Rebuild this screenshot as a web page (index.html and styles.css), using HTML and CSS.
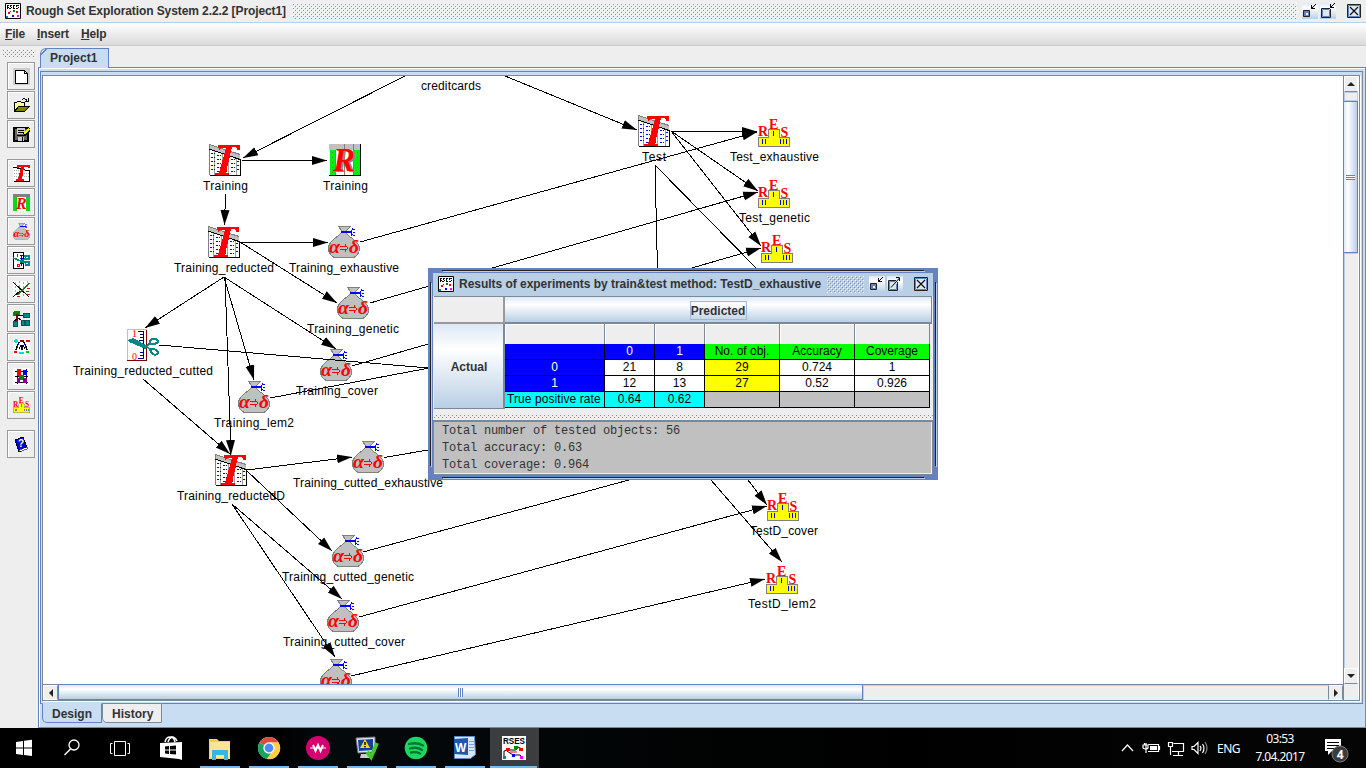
FILE: index.html
```html
<!DOCTYPE html>
<html lang="en">
<head>
<meta charset="utf-8">
<title>Rough Set Exploration System</title>
<link rel="stylesheet" href="styles.css">
</head>
<body>
<svg class="defs" width="0" height="0">
  <defs>
    <marker id="arrow" markerUnits="userSpaceOnUse" markerWidth="17" markerHeight="12" refX="15" refY="6" orient="auto"><path d="M0 1.500L15 6L0 10.500Z" fill="#000"/></marker>
    <symbol id="rses" viewBox="0 0 16 16">
      <path fill="#fff" stroke="#000" d="M.5.5h15v15H.5z"/>
      <path d="M2 2h1v4H2zM3 2h1v1H3zM3 4h1v1H3zM4 5h1v1H4zM5 2h2v1H5zM5 3h1v1H5zM6 4h1v1H6zM5 5h1v1H5zM8 2h1v4H8zM9 2h1v1H9zM9 5h1v1H9zM11 2h3v1h-3zM11 3h1v1h-1zM13 4h1v1h-1zM11 5h2v1h-2z"/>
      <path fill="red" d="M3 9h2v2H3zM11 8h2v2h-2z"/><path fill="#007a20" d="M8 7h2v2H8z"/><path fill="#088" d="M1 13h2v2H1z"/><path fill="blue" d="M7 12h2v2H7z"/><path fill="#f0f" d="M12 12h2v2h-2z"/><path fill="red" d="M5 8h1v1H5z"/>
    </symbol>
    <symbol id="rses-big" viewBox="0 0 24 24">
      <path fill="#fff" d="M0 0h24v24H0z"/>
      <path fill="none" stroke="#000" d="M2 21V15l4-1h8l2-3 4 2M5 15l6 4h7l2 2"/>
      <path fill="red" d="M4 12h4v3H4zM17 12h4v3h-4z"/><path fill="#080" d="M12 10h4v3h-4z"/><path fill="#088" d="M1 20h3v3H1z"/><path fill="blue" d="M10 18h3v3h-3z"/><path fill="#f0f" d="M18 20h3v3h-3z"/><path fill="none" stroke="red" d="M8 16h7"/>
    </symbol>
    <symbol id="table" viewBox="0 0 32 32">
      <path fill="#fff" d="M1 4l30 10v17H1z"/>
      <path stroke="#a0a0a0" d="M5.500 6v25M13.500 8v23M19.500 10v21M27.500 12v19"/>
      <path fill="none" stroke="#00f" stroke-dasharray="2 1" d="M2 9.500h4M2 13.500h4M2 17.500h4M2 21.500h4M2 25.500h4M8 11.500h4M8 15.500h4M8 19.500h4M8 23.500h4M8 27.500h4M16 15.500h3M16 19.500h3M16 23.500h3M16 27.500h3M22 15.500h4M22 19.500h4M22 23.500h4M22 27.500h4M28 17.500h3M28 21.500h3M28 25.500h3"/>
      <path fill="#c0c0c0" d="M0 0l31 10v6L0 5z"/><path fill="none" stroke="#808080" d="M.5 31V.5L31 10.500"/>
      <path fill="none" stroke="#000" d="M0 5l31 10.500V31.500H1"/>
      <path fill="#fff" d="M21 3h8v6l-8-2z"/>
      <path fill="red" d="M9 1h22v5h-3q0-3-3-3h-2l-6 26h3v2H6v-2h4L17 4h-3q-3 0-4 2z"/>
    </symbol>
    <symbol id="reduct" viewBox="0 0 32 32">
      <path fill="#fff" d="M0 0h32v32H0z"/><path fill="#0e1" d="M1 6h5v25H1zM25 6h6v25h-6z"/><path fill="#c0c0c0" d="M0 0h32v6H0z"/>
      <path stroke="#808080" d="M15.500 0v32M24.500 0v32M6.500 6v25"/><path fill="none" stroke="#393" stroke-dasharray="1 4" d="M3.500 8v22M28.500 8v22"/>
      <path fill="none" stroke="#000" d="M31.500 0v31.500H0"/>
      <text class="glyph-r gray" x="6" y="28">R</text><text class="glyph-r" x="4" y="27">R</text>
    </symbol>
    <symbol id="bag" viewBox="0 0 32 32">
      <path fill="#c0c0c0" stroke="#808080" d="M10.500.5h12l-4 4v3q2 3 6 5 7 5 7 11 0 4-5 7.500H5.500Q.5 28 .5 22.500q0-5 5-9 5-4 7.500-6.500V4z"/>
      <path fill="none" stroke="#00f" stroke-width="2" d="M13 6h11"/><path fill="none" stroke="#00f" d="M22 6l3-3h2M22 6l3 3h2M24 3v-1M23 8v2M25 6h2"/>
      <text class="glyph" x="1" y="26.500" textLength="11" lengthAdjust="spacingAndGlyphs">α</text><path fill="none" stroke="red" d="M12 20.500h7M12 23.500h7M17 18.500l3 3.500-3 3.500"/><text class="glyph" x="21" y="26.500" textLength="10" lengthAdjust="spacingAndGlyphs">δ</text>
    </symbol>
    <symbol id="res" viewBox="0 0 32 28" overflow="visible">
      <path fill="#ff0" stroke="#808080" d="M.5 27.500v-9h10v-8h11v8h10v9z"/><path stroke="#00f" d="M4.500 20v5M7.500 20v5M15.500 12v5M22.500 20v5M25.500 20v5M28.500 20v5"/>
      <text class="letter" x="0" y="17">R</text><text class="letter" x="11" y="9.500">E</text><text class="letter" x="22.500" y="17.500">S</text>
    </symbol>
    <symbol id="cut" viewBox="0 0 32 32">
      <path fill="#fff" stroke="#c0c0c0" d="M.5 31V.5h19v31"/><path fill="none" stroke="#800000" d="M0 31.500h19.500V.5"/>
      <path fill="none" stroke="#000080" d="M11 2.500h5.500V29.500H11M13 5.500h3M13 8.500h3M12 11.500h4M13 23.500h3M13 26.500h3"/>
      <text class="digit" x="5" y="8">1</text><text class="digit" x="5" y="31">0</text>
      <path fill="#088" d="M0 11l6-2 15 8-2 3L2 13z"/><path fill="none" stroke="#088" stroke-width="2" d="M17 19l5-4M19 17l5 4M23 12q1-2 4-2 4 0 4 3-3 3-8 2zM23 20q5-1 8 3 0 2-3 3-3-1-5-5z"/>
    </symbol>
    <symbol id="mini" viewBox="0 0 16 16"><path fill="url(#bt)" d="M0 0h16v16H0z"/><path fill="#6382bf" stroke="#222" stroke-width="1" d="M1.500 7.500h6v6h-6z"/><path fill="#fff" d="M4 10h2v2H4z"/><path fill="none" stroke="#000" d="M14 1L9.500 5.500M9.500 2v3.500H13"/></symbol>
    <symbol id="maxi" viewBox="0 0 16 16"><path fill="url(#bt)" d="M0 0h16v16H0z"/><path fill="#dce8f5" stroke="#222" d="M10 5.500H1.500v9h9V6"/><path fill="none" stroke="#6382bf" d="M9 6.500H2.500v7h7V7"/><path fill="none" stroke="#000" d="M15 0l-4.500 4.500M10.500 1v3.500H14"/></symbol>
    <symbol id="maxi2" viewBox="0 0 16 16"><path fill="url(#bt)" d="M0 0h16v16H0z"/><path fill="#dce8f5" stroke="#222" d="M9 4.500H1.500v10h9V6"/><path fill="none" stroke="#6382bf" d="M8 5.500H2.500v8h7V8"/><path fill="none" stroke="#000" d="M4 11.500L12.500 2M9 1.500h3.500V5"/></symbol>
    <symbol id="close" viewBox="0 0 14 14"><path fill="#dce8f5" stroke="#222" d="M.5.5h13v13H.5z"/><path fill="none" stroke="#6382bf" d="M1.500 1.500h11v11h-11z"/><path fill="none" stroke="#111" stroke-width="1.200" d="M3 3l8 8M11 3l-8 8"/></symbol>
    <linearGradient id="bt" x2="0" y2="1"><stop offset="0" stop-color="#dce8f5"/><stop offset=".3" stop-color="#fff"/><stop offset="1" stop-color="#b8cfe5"/></linearGradient>
  </defs>
</svg>

<div class="app">
  <header class="titlebar">
    <svg class="i16"><use href="#rses"/></svg>
    <span class="title">Rough Set Exploration System 2.2.2 [Project1]</span>
    <span class="bumps"></span>
    <svg class="i16 b1"><use href="#mini"/></svg><svg class="i16 b2"><use href="#maxi"/></svg><svg class="i14"><use href="#close"/></svg>
  </header>
  <nav class="menubar"><span><u>F</u>ile</span><span><u>I</u>nsert</span><span><u>H</u>elp</span></nav>
  <div class="workspace">
    <aside class="tools">
      <div class="grip"></div>
      <button><svg viewBox="0 0 17 17"><path fill="#ccc" d="M0 0h17v17H0z"/><path fill="#fff" stroke="#000" d="M2.500 2.500h9l3 3v10h-12z"/><path fill="none" stroke="#000" d="M11.500 2.500v3h3"/></svg></button>
      <button><svg class="clear" viewBox="0 0 17 17"><path fill="#ff9" stroke="#000" d="M1.500 14.500v-9h2l1-1h3l1 1h3v4h-5z"/><path fill="#808000" stroke="#000" d="M1.500 14.500l4-5h11l-5 5z"/><path fill="none" stroke="#000" d="M9 3q3-3 5 1M15 1v3h-3"/></svg></button>
      <button><svg class="clear" viewBox="0 0 17 17"><path fill="#666" stroke="#000" stroke-width="1.500" d="M1 2h14v13H1z"/><path fill="#ccc" d="M4 2h8v6H4zM5 11h6v4H5z"/><path stroke="#000" d="M5 4.500h6M5 6.500h6M9.500 11v4M4 9.500h9"/><path stroke="#000" stroke-width="3" d="M11 9l6-6"/><path stroke="#ee0" stroke-width="1.500" d="M11 8l5-5"/></svg></button>
      <i class="sep"></i>
      <button><svg viewBox="0 0 17 17"><path fill="none" stroke="#aaa" stroke-dasharray="1 1" d="M1 5.500h15M1 8.500h15M1 11.500h15"/><path fill="none" stroke="#000" d="M0 2l16 4M16.500 5v11.500H1"/><path fill="red" d="M4 0h13v3h-2V2h-4L9 14h2v2H3v-2h2L8 2H6v1H4z"/></svg></button>
      <button><svg viewBox="0 0 17 17"><path fill="#0d1" d="M0 2h4v15H0zM13 2h4v15h-4z"/><path fill="#808080" d="M0 0h17v3H0z"/><text class="mini-r" x="3" y="15">R</text></svg></button>
      <button><svg class="clear"><use href="#bag"/></svg></button>
      <button><svg viewBox="0 0 17 17"><path fill="#fff" stroke="#000" d="M.5.5h10v16H.5z"/><path stroke="#00a" d="M7 3.500h3M7 6.500h3M7 11.500h3M8.500 3v11"/><path stroke="red" d="M4.500 2v3M4 12.500h2v2H4z" fill="none"/><path fill="none" stroke="#088" stroke-width="1.700" d="M0 6l13 5M7 10l6-4M12 4h4v3h-3zM12 10h4v3h-3z"/></svg></button>
      <button><svg viewBox="0 0 17 17"><path fill="#fff" d="M0 0h17v17H0z"/><path stroke="#0ee" stroke-dasharray="2 2" d="M2.500 1v13M6.500 0v14M10.500 1v15M14.500 0v7"/><path stroke="#000" d="M0 1l16 15M0 16l7-6"/><path stroke="#277027" stroke-width="1.500" d="M5 14L16 2"/><path stroke="red" d="M14 7.500h3M13 10.500h3M14 13.500h3M4 15.500h3"/></svg></button>
      <button><svg class="clear" viewBox="0 0 17 17"><path fill="#080" d="M1 1h6v5H0V2z"/><path stroke="#800000" stroke-width="2" d="M4 4v7"/><path stroke="#000" d="M5 5.500h7M5 8l6 4M4 9l-3 2"/><path fill="#088" stroke="#055" d="M10.500 3.500h6v4h-6zM.5 11.500h4v5h-4zM8.500 10.500h3v5h-3zM12.500 10.500h4v5h-4z"/></svg></button>
      <button><svg viewBox="0 0 17 17"><path fill="#fff" d="M0 0h17v17H0z"/><path stroke="#0dd" stroke-width="1.500" d="M1 2h4M3 0v4M6 14h5"/><path stroke="red" stroke-width="2" d="M13 2h4M1 13h3"/><path stroke="#0c0" stroke-width="2" d="M13 13h3"/><path stroke="#800" stroke-width="2" d="M7 2h4"/><path stroke="#00f" fill="none" stroke-width="1.500" d="M5 5L3 11M12 5l2 6"/><path stroke="#000" fill="none" d="M7 3Q3 5 4 11M10 3q4 2 3 8M6 10l2-4 1 5 1-5 2 4"/></svg></button>
      <button><svg viewBox="0 0 17 17"><path fill="#fff" d="M0 0h17v17H0z"/><path stroke="#000" d="M2 8.500h13M2 14.500h13M2 3.500h13M4.500 1v15M13.500 1v15"/><path fill="#e00" d="M4 1h4v7H4z"/><path fill="#00e" d="M10 2h4v5h-4z"/><path fill="#080" d="M6 7h5v5H6z"/><path fill="#808" d="M4 10h3v5H4zM10 10h4v5h-4z"/></svg></button>
      <button><svg class="clear"><use href="#res"/></svg></button>
      <i class="sep"></i>
      <button><svg class="clear" viewBox="0 0 17 17"><path fill="#00d" stroke="#000" d="M2 4l8-3 4 11-8 4z"/><path fill="#fff" stroke="#000" stroke-width=".6" d="M6 14l8-3v2l-8 3z"/><text class="q" x="5" y="11">?</text></svg></button>
    </aside>
    <main class="pane">
      <div class="tabs"><span class="tab">Project1</span></div>
      <div class="outer">
        <div class="inner">
          <div class="view">
            <svg class="canvas" width="1300" height="608" viewBox="43 76 1300 608">
              <g class="icons">
                <use href="#table" x="209" y="144" width="32" height="32"/><use href="#reduct" x="329" y="144" width="32" height="32"/><use href="#table" x="208" y="226" width="32" height="32"/><use href="#table" x="638" y="115" width="32" height="32"/><use href="#table" x="215" y="454" width="32" height="32"/><use href="#cut" x="127" y="329" width="32" height="32"/>
                <use href="#bag" x="328" y="226" width="32" height="32"/><use href="#bag" x="337" y="287" width="32" height="32"/><use href="#bag" x="320" y="349" width="32" height="32"/><use href="#bag" x="238" y="381" width="32" height="32"/><use href="#bag" x="352" y="441" width="32" height="32"/><use href="#bag" x="332" y="535" width="32" height="32"/><use href="#bag" x="327" y="600" width="32" height="32"/><use href="#bag" x="320" y="659" width="32" height="32"/>
                <use href="#res" x="758" y="119" width="32" height="28"/><use href="#res" x="758" y="180" width="32" height="28"/><use href="#res" x="761" y="235" width="32" height="28"/><use href="#res" x="767" y="493" width="32" height="28"/><use href="#res" x="766" y="566" width="32" height="28"/>
              </g>
              <g class="edges">
                <path d="M405 76L243 158"/><path d="M505 76L637 130"/><path d="M242 160.500H327"/><path d="M225.500 194L224.500 225"/><path d="M240 242.500H328"/><path d="M240 242L337 303"/><path d="M224 277L145 328"/><path d="M224 277L254 380"/><path d="M224 277L336 349"/><path d="M225 277L231 455"/><path d="M143 379L230 454"/>
                <path d="M360 242L757 132"/><path d="M370 303L758 192"/><path d="M352 366L761 248"/><path d="M671 131.500H757"/><path d="M671 131L758 191"/><path d="M671 131L761 246"/><path d="M247 470L352 457"/><path d="M247 471L332 551"/><path d="M232 504L342 599"/><path d="M232 504L335 657"/>
                <path d="M359 617L767 506"/><path d="M351 676L765 579"/><path d="M748 480L767 505"/><path d="M711 480L782 562"/>
                <g class="plain"><path d="M159 345L440 369"/><path d="M270 398L440 366"/><path d="M655 165L657.500 270"/><path d="M655 165L758 270"/><path d="M384 457.500L440 448"/><path d="M363 552L640 477"/></g>
              </g>
              <g class="labels">
                <text x="421" y="90" textLength="60">creditcards</text><text x="203" y="190" textLength="45">Training</text><text x="323" y="190" textLength="45">Training</text><text x="174" y="272" textLength="100">Training_reducted</text><text x="289" y="272" textLength="110">Training_exhaustive</text><text x="307" y="333" textLength="92">Training_genetic</text><text x="296" y="395" textLength="82">Training_cover</text><text x="214" y="427" textLength="80">Training_lem2</text><text x="73" y="375" textLength="140">Training_reducted_cutted</text><text x="177" y="500" textLength="108">Training_reductedD</text><text x="293" y="487" textLength="150">Training_cutted_exhaustive</text><text x="282" y="581" textLength="132">Training_cutted_genetic</text><text x="283" y="646" textLength="122">Training_cutted_cover</text>
                <text x="642" y="161" textLength="24">Test</text><text x="730" y="161" textLength="89">Test_exhaustive</text><text x="739" y="222" textLength="71">Test_genetic</text><text x="750" y="535" textLength="68">TestD_cover</text><text x="748" y="608" textLength="68">TestD_lem2</text>
              </g>
            </svg>
            <div class="vscroll"><i class="sb up"></i><i class="vgap"></i><i class="vthumb"><b></b></i><i class="track"></i><i class="sb down"></i></div>
            <div class="hscroll"><i class="sb left"></i><i class="hthumb"><b></b></i><i class="track"></i><i class="sb right"></i></div>
            <div class="corner"></div>
          </div>
        </div>
        <div class="btabs"><span class="on">Design</span><span>History</span></div>
      </div>
    </main>
  </div>
  <footer class="taskbar">
    <div class="task"><svg viewBox="0 0 48 40"><path fill="#fff" d="M16 14l7-1v6.500h-7zM24 12.800l8-1v7.700h-8zM16 20.500h7V27l-7-1zM24 20.500h8V28l-8-1z"/></svg></div>
    <div class="task"><svg viewBox="0 0 48 40"><circle cx="26" cy="17" r="5" fill="none" stroke="#fff" stroke-width="1.300"/><path stroke="#fff" stroke-width="1.400" d="M22.500 21L16.500 27"/></svg></div>
    <div class="task"><svg viewBox="0 0 48 40"><path fill="none" stroke="#fff" d="M18.500 13.500h11v14h-11zM16.500 15.500h-2v10h2M31.500 15.500h2v10h-2"/></svg></div>
    <div class="task store"><svg viewBox="0 0 48 40"><path fill="#fff" d="M14 15l22-1v18l-3-1-19-2z"/><path fill="none" stroke="#fff" stroke-width="1.500" d="M19 14q1-5 5-5 4 0 5 5M22 14q1-4 5-5 3 1 4 4"/><path fill="#000" d="M19 18.500l4-.5v3.500h-4zM24 18l6-.5v4h-6zM19 22.500h4V26l-4-.5zM24 22.500h6v4l-6-.5z"/></svg></div>
    <div class="task run"><svg viewBox="0 0 48 40"><path fill="#f9ce55" d="M13 11h8l2 2h11v18H13z"/><path fill="#ffe498" d="M14 14h20v16H14z"/><path fill="#37b4e8" d="M16 32V22h16v10h-4v-5h-8v5z"/></svg></div>
    <div class="task run"><svg viewBox="0 0 48 40"><circle cx="24" cy="20" r="11" fill="#fff"/><path fill="#dd4b3e" d="M24 20L14.500 14.500A11 11 0 0 1 33.500 14.500H24z"/><path fill="#1aa260" d="M24 20L14.500 14.500A11 11 0 0 0 22 31l5-7z"/><path fill="#ffce44" d="M27 24l-5 7A11 11 0 0 0 33.500 14.500H24z"/><circle cx="24" cy="20" r="5.700" fill="#fff"/><circle cx="24" cy="20" r="4.400" fill="#4c8bf5"/></svg></div>
    <div class="task run"><svg viewBox="0 0 48 40"><circle cx="24" cy="20" r="12" fill="#d4006f"/><path fill="none" stroke="#fff" stroke-width="2" d="M19 17l2.500 6 2.500-6 2.500 6 2.500-6"/><path stroke="#fff" d="M16 20h16"/></svg></div>
    <div class="task run"><svg viewBox="0 0 48 40"><path fill="#dde3e8" stroke="#777" d="M13 10l19-1v15l-17 1z"/><path fill="#123fa5" d="M15 12l15-1v11l-14 1z"/><path fill="#ccc" d="M18 26h9l3 4H17z"/><path fill="#ffd51c" d="M22 11l5 9H17z"/><path stroke="#000" stroke-width="1.500" d="M22 14v3M22 18v1.500"/><path fill="none" stroke="#42c928" stroke-width="4" d="M24 24l4 5 6-14"/></svg></div>
    <div class="task run"><svg viewBox="0 0 48 40"><circle cx="24" cy="20" r="11.300" fill="#1ed760"/><path fill="none" stroke="#073" stroke-width="2.300" stroke-linecap="round" d="M17 16q8-2 14 1.500M18 20.500q7-2 12 1.500M19 24.500q5-1 9 1"/></svg></div>
    <div class="task run"><svg viewBox="0 0 48 40"><path fill="#d7e8fa" stroke="#5c8dc8" d="M13.500 8.500h20l1 18-5 4h-16z"/><path fill="#1e58ad" d="M13 11l14-1v17l-14-1z"/><path stroke="#7ba1d6" d="M28 13.500h5M28 16.500h5M28 19.500h5M28 22.500h5"/><text class="word" x="14" y="24">W</text></svg></div>
    <div class="task run active"><svg viewBox="0 0 48 40"><use href="#rses-big" x="12" y="8" width="24" height="24"/><text class="rtext" x="13" y="16" textLength="22" lengthAdjust="spacingAndGlyphs">RSES</text></svg></div>
    <div class="tray">
      <svg width="90" height="20" viewBox="0 0 90 20"><g fill="none" stroke="#fff" stroke-width="1.200"><path d="M1 13l5.500-6L12 13M27.500 6.500h10v7H27M38.500 8v4M25 5v10M22 7h5v3q-2 2-5 0zM23.500 5v2M52.500 5.500h10v8H51M57.500 14v3M52 17.500h10M47.500 4.500h4v4h-4zM49.500 9v8M71 8.500h2l4-4v11l-4-4h-2zM79 8q2 2 0 5M81.500 6q3 4 0 9"/><path stroke="#888" d="M84 4q4 6 0 12"/></g><path fill="#fff" d="M29 8h7v4h-7z"/></svg>
      <span class="lang">ENG</span>
      <div class="clock"><span>03:53</span><span>7.04.2017</span></div>
      <svg class="note" width="26" height="26" viewBox="0 0 26 26"><path fill="#fff" d="M1 1h16v12H8l-4 4v-4H1z"/><path stroke="#000" d="M3 4.500h12M3 7.500h12M3 10.500h8"/><circle cx="16" cy="16" r="8" fill="#3b3b3b" stroke="#777"/><text x="12.700" y="20.500">4</text></svg>
    </div>
  </footer>
</div>

<section class="dialog">
  <div class="dtitle"><svg class="i16"><use href="#rses"/></svg><span class="title">Results of experiments by train&amp;test method: TestD_exhaustive</span><span class="bumps"></span><svg class="i16 b1"><use href="#mini"/></svg><svg class="i16 b2"><use href="#maxi2"/></svg><svg class="i14"><use href="#close"/></svg></div>
  <div class="grid">
    <div class="blank"></div><div class="pred"><span>Predicted</span></div>
    <div class="actual">Actual</div>
    <table>
      <colgroup><col class="w100"><col class="w50"><col class="w50"><col class="w75"><col class="w75"><col class="w75"></colgroup>
      <tr class="head"><th></th><th></th><th></th><th></th><th></th><th></th></tr>
      <tr><td class="blue"></td><td class="blue">0</td><td class="blue">1</td><td class="green">No. of obj.</td><td class="green">Accuracy</td><td class="green">Coverage</td></tr>
      <tr><td class="blue">0</td><td>21</td><td>8</td><td class="yellow">29</td><td>0.724</td><td>1</td></tr>
      <tr><td class="blue">1</td><td>12</td><td>13</td><td class="yellow">27</td><td>0.52</td><td>0.926</td></tr>
      <tr><td class="cyan rate">True positive rate</td><td class="cyan">0.64</td><td class="cyan">0.62</td><td class="gray"></td><td class="gray"></td><td class="gray"></td></tr>
    </table>
  </div>
  <div class="split"></div>
  <pre class="out">Total number of tested objects: 56
Total accuracy: 0.63
Total coverage: 0.964</pre>
  <i class="ln t"></i><i class="ln b"></i><i class="ln l"></i><i class="ln r"></i>
</section>
</body>
</html>
```
FILE: styles.css
```css
* { box-sizing: border-box; }
body { margin: 0; width: 1366px; height: 768px; overflow: hidden; background: #eee; font: bold 12px "Liberation Sans", Arial, sans-serif; color: #333; position: relative; }
i { font-style: normal; display: block; }
svg { display: block; }
.defs { position: absolute; }
.app { display: flex; flex-direction: column; height: 768px; }
.i16 { width: 16px; height: 16px; flex: none; }
.i14 { width: 14px; height: 14px; flex: none; }
.glyph { font: italic bold 18px "Liberation Serif", serif; fill: red; }
.glyph-r { font: italic bold 33px "Liberation Serif", serif; fill: red; }
.glyph-r.gray { fill: #888; }
.mini-r { font: italic bold 16px "Liberation Serif", serif; fill: red; }
.letter { font: bold 14px "Liberation Serif", serif; fill: #f00; }
.digit { font: 10px "Liberation Serif", serif; fill: #f00; }
.q { font: bold 10px "Liberation Sans", sans-serif; fill: #fff; }
.bumps { background-image: radial-gradient(circle at 1.5px 1.5px, #7d92a8 .6px, transparent .75px), radial-gradient(circle at 3.5px 3.5px, #7d92a8 .6px, transparent .75px), radial-gradient(circle at .5px .5px, #fff .6px, transparent .75px), radial-gradient(circle at 2.5px 2.5px, #fff .6px, transparent .75px); background-size: 4px 4px; }

.titlebar { height: 23px; flex: none; border-bottom: 1px solid #b8cfe5; display: flex; align-items: flex-start; padding: 3px 6px 0 5px; }
.titlebar .title { width: 260px; margin: 1px 6px 0 5px; white-space: nowrap; line-height: 15px; letter-spacing: -.09px; }
.titlebar .bumps { flex: 1; height: 16px; }
.b1 { margin-left: 5px; }
.b2 { margin-left: 2px; }
.titlebar .i14 { margin: 1px -1px 0 11px; }
.menubar { height: 23px; flex: none; border-bottom: 1px solid #ccc; background: linear-gradient(#fff, #dadada); display: flex; gap: 12px; padding: 4px 5px; line-height: 14px; letter-spacing: -.15px; }
.workspace { height: 682px; flex: none; display: flex; }

.tools { width: 38px; padding: 3px 3px 0 2px; display: flex; flex-direction: column; }
.grip { height: 9px; margin-bottom: 4px; background-image: radial-gradient(circle at 1.5px 1.5px, #888 .6px, transparent .75px), radial-gradient(circle at 3.5px 3.5px, #888 .6px, transparent .75px); background-size: 4px 4px; }
.tools button { width: 28px; height: 28px; margin: 0 0 1px 5px; padding: 0 0 0 1px; border: 1px solid #999; background: #eee; flex: none; display: flex; align-items: center; justify-content: center; box-shadow: inset 1px 1px #fff; }
.tools button svg { width: 17px; height: 17px; background: #fff; shape-rendering: crispEdges; }
.tools button svg.clear { background: none; }
.sep { height: 10px; flex: none; }

.pane { flex: 1; display: flex; flex-direction: column; min-width: 0; }
.tabs { height: 21px; padding: 2px 0 0 2px; display: flex; }
.tab { position: relative; z-index: 1; width: 69px; height: 20px; background: linear-gradient(135deg, #eee 3px, #6382bf 3px, #6382bf 4.500px, #c8ddf2 4.500px); border: 1px solid #6382bf; border-bottom: 0; border-top-left-radius: 6px; padding: 2px 0 0 9px; line-height: 14px; }
.outer { height: 661px; background: #c8ddf2; border: 1px solid #6382bf; border-right-color: #7a8a99; border-bottom-color: #7a8a99; box-shadow: inset 1px 1px #fff; padding: 3px 2px 0 1px; }
.inner { height: 633px; border: 1px solid #6382bf; border-right-color: #7a8a99; padding: 3px 2px 2px 1px; }
.view { height: 626px; border: 1px solid #7a8a99; box-shadow: 1px 1px #fff; display: grid; grid-template: 608px 16px / 1300px 15px; overflow: hidden; background: #fff; }
.canvas { background: #fff; }
.edges { fill: none; stroke: #000; stroke-width: 1; shape-rendering: crispEdges; }
.edges > path { marker-end: url(#arrow); }
.icons { shape-rendering: crispEdges; }
.labels { font: 12px "Liberation Sans", Arial, sans-serif; fill: #000; }
.vscroll { display: flex; flex-direction: column; border-left: 1px solid #7a8a99; background: #eee; }
.track { flex: 1; border: 1px solid #b8cfe5; border-right: 0; border-bottom: 0; }
.sb { flex: none; width: 14px; height: 16px; border: 1px solid #fff; border-bottom-color: #7a8a99; background: #eee; display: grid; place-items: center; }
.sb::before { content: ""; border: 4px solid transparent; }
.up::before { border-bottom-color: #222; border-top: 0; }
.down::before { border-top-color: #222; border-bottom: 0; }
.left::before { border-right-color: #222; border-left: 0; }
.right::before { border-left-color: #222; border-right: 0; }
.sb.left, .sb.right { width: 15px; height: 15px; border-right-color: #7a8a99; border-bottom-color: #fff; }
.sb.right { border-left-color: #7a8a99; }
.vgap { height: 9px; border: 1px solid #b8cfe5; }
.vthumb { height: 152px; margin-left: -1px; border: 1px solid #6382bf; background: linear-gradient(90deg, #dce8f5, #fff 30%, #b8cfe5); display: grid; place-items: center; }
.vthumb b { width: 9px; height: 5px; background: repeating-linear-gradient(#6382bf 0 1px, #fff 1px 2px); }
.hscroll { display: flex; border-top: 1px solid #7a8a99; background: #eee; }
.hthumb { width: 805px; margin-top: -1px; height: 16px; border: 1px solid #6382bf; background: linear-gradient(#dce8f5, #fff 30%, #b8cfe5); display: grid; place-items: center; }
.hthumb b { width: 5px; height: 9px; background: repeating-linear-gradient(90deg, #6382bf 0 1px, #fff 1px 2px); }
.corner { background: #eee; border: 1px solid #7a8a99; border-width: 0 0 0 1px; }
.btabs { display: flex; padding-left: 2px; margin-top: -1px; line-height: 14px; }
.btabs span { width: 60px; height: 20px; padding: 3px 0 0 9px; background: #eee; border: 1px solid #7a8a99; border-bottom-left-radius: 5px; }
.btabs .on { background: #c8ddf2; border-color: #6382bf; border-top-color: #c8ddf2; }

.taskbar { height: 40px; background: linear-gradient(90deg, #000 0 280px, #04090c 320px, #020505 600px, #000 900px, #050505); display: flex; font: 12px "Noto Sans", sans-serif; color: #fff; padding-right: 7px; }
.task { width: 49px; height: 40px; flex: none; }
.task:nth-child(-n+3) { width: 48px; }
.task.store { width: 52px; padding-left: 2px; }
.task svg { width: 48px; height: 40px; }
.task.run { background: linear-gradient(#76b9ed, #76b9ed) 4px 38px / 40px 2px no-repeat; }
.task.run.active { background: linear-gradient(#76b9ed, #76b9ed) 0 38px / 47px 2px no-repeat, #3b3d3f; }
.word { font: bold 12px "Liberation Sans", sans-serif; fill: #fff; }
.rtext { font: bold 9px "Liberation Sans", sans-serif; fill: #000; }
.tray { margin-left: auto; display: flex; align-items: center; }
.lang { margin-left: 6px; width: 24px; font-size: 12px; letter-spacing: -.5px; }
.clock { width: 64px; margin-left: 7px; display: flex; flex-direction: column; text-align: center; line-height: 18px; letter-spacing: -.6px; padding-bottom: 1px; }
.note { margin: 5px 9px 0 12px; }
.note text { font: bold 12px "Noto Sans", sans-serif; fill: #fff; }

.dialog { position: absolute; left: 428px; top: 268px; width: 510px; height: 212px; border: 5px solid #6382bf; background: #eee; }
.dtitle { height: 23px; background: #b8cfe5; display: flex; padding: 3px 5px 0; align-items: flex-start; }
.dtitle .title { width: 362px; margin: 1px 6px 0 5px; white-space: nowrap; line-height: 15px; letter-spacing: -.03px; }
.dtitle .bumps { width: 37px; height: 17px; }
.dtitle .i14 { margin: 1px 0 0 11px; }
.grid { display: grid; grid-template: 27px 85px / 71px 427px; border-top: 1px solid #7a8a99; width: 498px; margin-left: 1px; }
.blank { border: 1px solid #999; border-width: 0 2px 2px 0; background: #eee; }
.pred { background: linear-gradient(#dce8f5, #fff 30%, #b8cfe5); border-bottom: 2px solid #7a8a99; border-right: 1px solid #7a8a99; display: grid; place-items: center; padding-top: 1px; }
.pred span { border: 1px solid #a3b8cc; padding: 2px 0 1px; line-height: 14px; width: 57px; text-align: center; white-space: nowrap; }
.actual { background: linear-gradient(#dce8f5, #fff 30%, #b8cfe5); border-right: 2px solid #7a8a99; border-bottom: 1px solid #7a8a99; display: grid; place-items: center; padding: 1px 0 0 1px; }
table { border-collapse: separate; border-spacing: 0; table-layout: fixed; width: 425px; height: 84px; font: 12px "Liberation Sans", Arial, sans-serif; color: #000; }
.w100 { width: 100px; } .w50 { width: 50px; } .w75 { width: 75px; }
td { height: 16px; padding: 0; line-height: 15px; text-align: center; background: #fff; border: 1px solid #000; border-width: 0 1px 1px 0; white-space: nowrap; }
th { height: 20px; padding: 0; background: #eee; border: 1px solid #7a8a99; border-width: 0 1px 0 0; box-shadow: inset 1px 1px #fff; }
td.blue { background: #00f; color: #fff; } td.green { background: #0f0; } td.yellow { background: #ff0; } td.cyan { background: #0ff; } td.gray { background: #c0c0c0; }
td.rate { text-align: left; padding-left: 2px; letter-spacing: .08px; }
.split { height: 11px; background: radial-gradient(circle at 1.5px 1.5px, #889 .6px, transparent .75px) 2px 5px / 4px 4px repeat-x, radial-gradient(circle at 3.5px 3.5px, #889 .6px, transparent .75px) 2px 5px / 4px 4px repeat-x, #eee; }
.out { margin: 0; height: 55px; background: #c0c0c0; border: 1px solid #7a8a99; border-top-width: 2px; box-shadow: inset -1px -1px #eee; padding: 1px 0 0 8px; font: 12px/17px "Liberation Mono", "Courier New", monospace; letter-spacing: -.2px; color: #333; }
.ln { position: absolute; background: #222; }
.ln.t { left: 9px; right: 9px; top: -3px; height: 1px; box-shadow: 1px 1px #b8cfe5; }
.ln.b { left: 9px; right: 9px; bottom: -3px; height: 1px; box-shadow: 1px 1px #b8cfe5; }
.ln.l { top: 9px; bottom: 9px; left: -3px; width: 1px; box-shadow: 1px 1px #b8cfe5; }
.ln.r { top: 9px; bottom: 9px; right: -3px; width: 1px; box-shadow: 1px 1px #b8cfe5; }
```
